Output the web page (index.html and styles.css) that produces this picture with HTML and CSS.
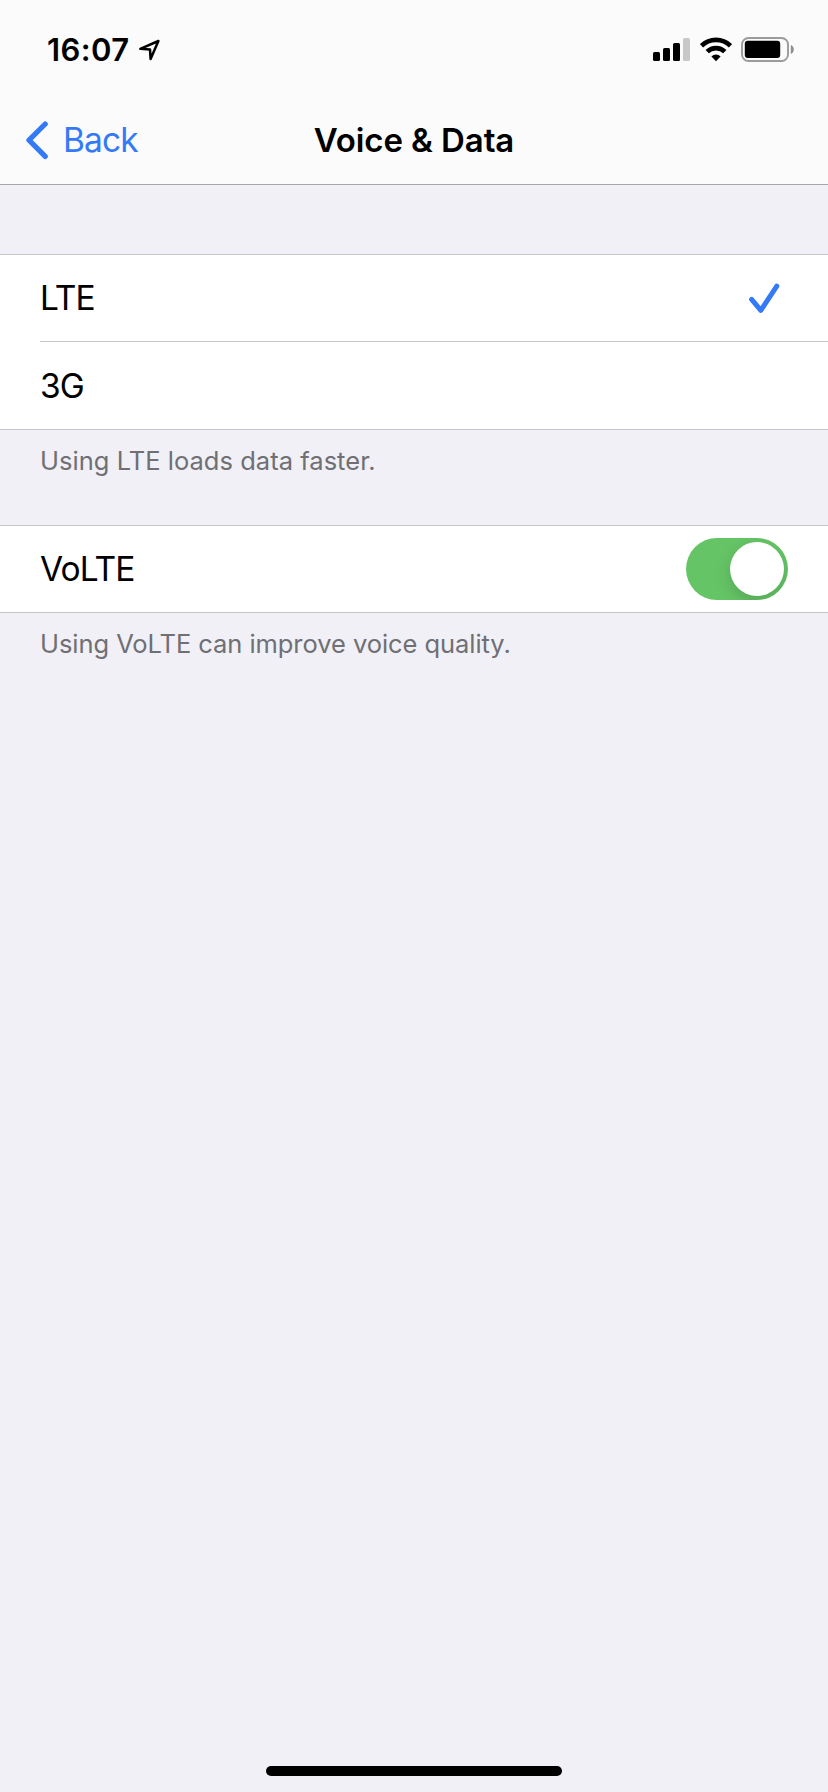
FILE: index.html
```
<!DOCTYPE html>
<html lang="en">
<head>
    <meta charset="UTF-8">
    <meta name="viewport" content="width=device-width, initial-scale=1.0">
    <title>Voice &amp; Data</title>
    <link rel="stylesheet" href="styles.css">
</head>
<body>
    <header class="header">
        <div class="status-bar">
            <div class="status-left">
                <span class="time">16:07</span>
                <svg class="location" width="23" height="22" viewBox="0 0 23 22">
                    <path d="M2.3 9.8 L20.4 2 L12.6 20 L12 10.4 Z" fill="none" stroke="#000" stroke-width="2.5" stroke-linejoin="round"/>
                </svg>
            </div>
            <div class="status-right">
                <svg class="signal" width="37" height="26" viewBox="0 0 37 26">
                    <rect x="0" y="15" width="7" height="9" rx="1.5"/>
                    <rect x="10" y="11" width="7" height="13" rx="1.5"/>
                    <rect x="20" y="6" width="7" height="18" rx="1.5"/>
                    <rect x="30" y="1" width="7" height="23" rx="1.5" fill="#c8c8c8"/>
                </svg>
                <svg class="wifi" width="32" height="26" viewBox="0 0 32 26">
                    <g fill="none" stroke="#000" stroke-width="4.6">
                        <path d="M1.5 8.8 A20.6 20.6 0 0 1 30.5 8.8"/>
                        <path d="M7.2 14.7 A12.5 12.5 0 0 1 24.8 14.7"/>
                    </g>
                    <path d="M11.4 19.4 A6.6 6.6 0 0 1 20.6 19.4 L16 24.2 Z"/>
                </svg>
                <svg class="battery" width="54" height="26" viewBox="0 0 54 26">
                    <rect x="1" y="1" width="46" height="23" rx="6.5" fill="none" stroke="#9b9b9b" stroke-width="1.9"/>
                    <rect x="3.8" y="3.8" width="35.4" height="17.3" rx="3"/>
                    <path d="M49.8 8 A4.9 4.9 0 0 1 49.8 17 Z" fill="#8e8e8e"/>
                </svg>
            </div>
        </div>
        <nav class="nav-bar">
            <a class="back" href="#">
                <svg width="24" height="40" viewBox="0 0 24 40">
                    <path d="M20.2 4 L4 20.2 L20.2 36.4" fill="none" stroke="#347af6" stroke-width="5.2" stroke-linecap="round" stroke-linejoin="round"/>
                </svg>
                <span>Back</span>
            </a>
            <h1 class="title">Voice &amp; Data</h1>
        </nav>
    </header>

    <main class="settings">
        <section class="group">
            <ul class="list">
                <li class="row">
                    <span class="label">LTE</span>
                    <svg class="check" width="32" height="32" viewBox="0 0 32 32">
                        <path d="M3.6 17.4 L12.8 28.4 L28.8 4.2" fill="none" stroke="#347af6" stroke-width="5" stroke-linecap="round" stroke-linejoin="round"/>
                    </svg>
                </li>
                <li class="row row-last">
                    <span class="label">3G</span>
                </li>
            </ul>
            <p class="note">Using LTE loads data faster.</p>
        </section>

        <section class="group">
            <ul class="list">
                <li class="row">
                    <span class="label">VoLTE</span>
                    <span class="toggle"><span class="knob"></span></span>
                </li>
            </ul>
            <p class="note note-volte">Using VoLTE can improve voice quality.</p>
        </section>
    </main>

    <div class="home-indicator"></div>
</body>
</html>
```

FILE: styles.css
```
* {
    box-sizing: border-box;
}
body {
    font-family: Inter, "Liberation Sans", sans-serif;
    background-color: #f0f0f6;
    color: #000;
    margin: 0;
    height: 1792px;
    display: flex;
    flex-direction: column;
    overflow: hidden;
}
svg {
    display: block;
    flex: none;
}

/* Header */
.header {
    height: 185px;
    background-color: #fbfbfb;
    border-bottom: 1px solid #a7a7aa;
}
.status-bar {
    height: 96px;
    padding: 4px 33px 0 47px;
    display: flex;
    align-items: center;
    justify-content: space-between;
}
.status-left,
.status-right {
    display: flex;
    align-items: center;
}
.time {
    font-size: 31px;
    font-weight: 600;
    line-height: 40px;
    width: 90.5px;
    letter-spacing: 0.4px;
}
.signal {
    margin-right: 9.5px;
}
.wifi {
    margin-right: 9.5px;
}
.nav-bar {
    height: 88px;
    display: grid;
    grid-template-columns: 1fr auto 1fr;
    align-items: center;
}
.back {
    display: flex;
    align-items: center;
    gap: 14px;
    padding-left: 25px;
    color: #347af6;
    font-size: 33.5px;
    letter-spacing: -0.9px;
    text-decoration: none;
}
.title {
    margin: 0;
    font-size: 33px;
    font-weight: 600;
    letter-spacing: -0.1px;
}

/* Grouped lists */
.settings {
    flex: 1;
    padding-top: 69px;
}
.list {
    list-style: none;
    margin: 0;
    padding: 0 0 0 40px;
    background-color: #fff;
    border-top: 1px solid #c5c5c8;
    border-bottom: 1px solid #c5c5c8;
}
.row {
    height: 86px;
    display: flex;
    align-items: center;
    justify-content: space-between;
    padding-right: 40px;
}
.row-last {
    height: 88px;
    border-top: 1px solid #c5c5c8;
}
.label {
    font-size: 33.5px;
    letter-spacing: -0.9px;
}
.check {
    margin-right: 8px;
}
.note {
    margin: 0;
    height: 95px;
    padding: 11px 40px 0;
    color: #6f6f74;
    font-size: 25.5px;
    line-height: 40px;
    letter-spacing: 0.03px;
}
.note-volte {
    letter-spacing: -0.06px;
}

/* Switch */
.toggle {
    width: 102px;
    height: 62px;
    padding: 4px;
    border-radius: 31px;
    background-color: #65c466;
    display: flex;
    justify-content: flex-end;
    overflow: hidden;
}
.knob {
    width: 54px;
    height: 54px;
    border-radius: 50%;
    background-color: #fff;
    box-shadow: 0 6px 16px rgba(0, 0, 0, 0.15);
}

.home-indicator {
    width: 296px;
    height: 10px;
    margin: 0 auto 16px;
    border-radius: 5px;
    background-color: #000;
}
```
